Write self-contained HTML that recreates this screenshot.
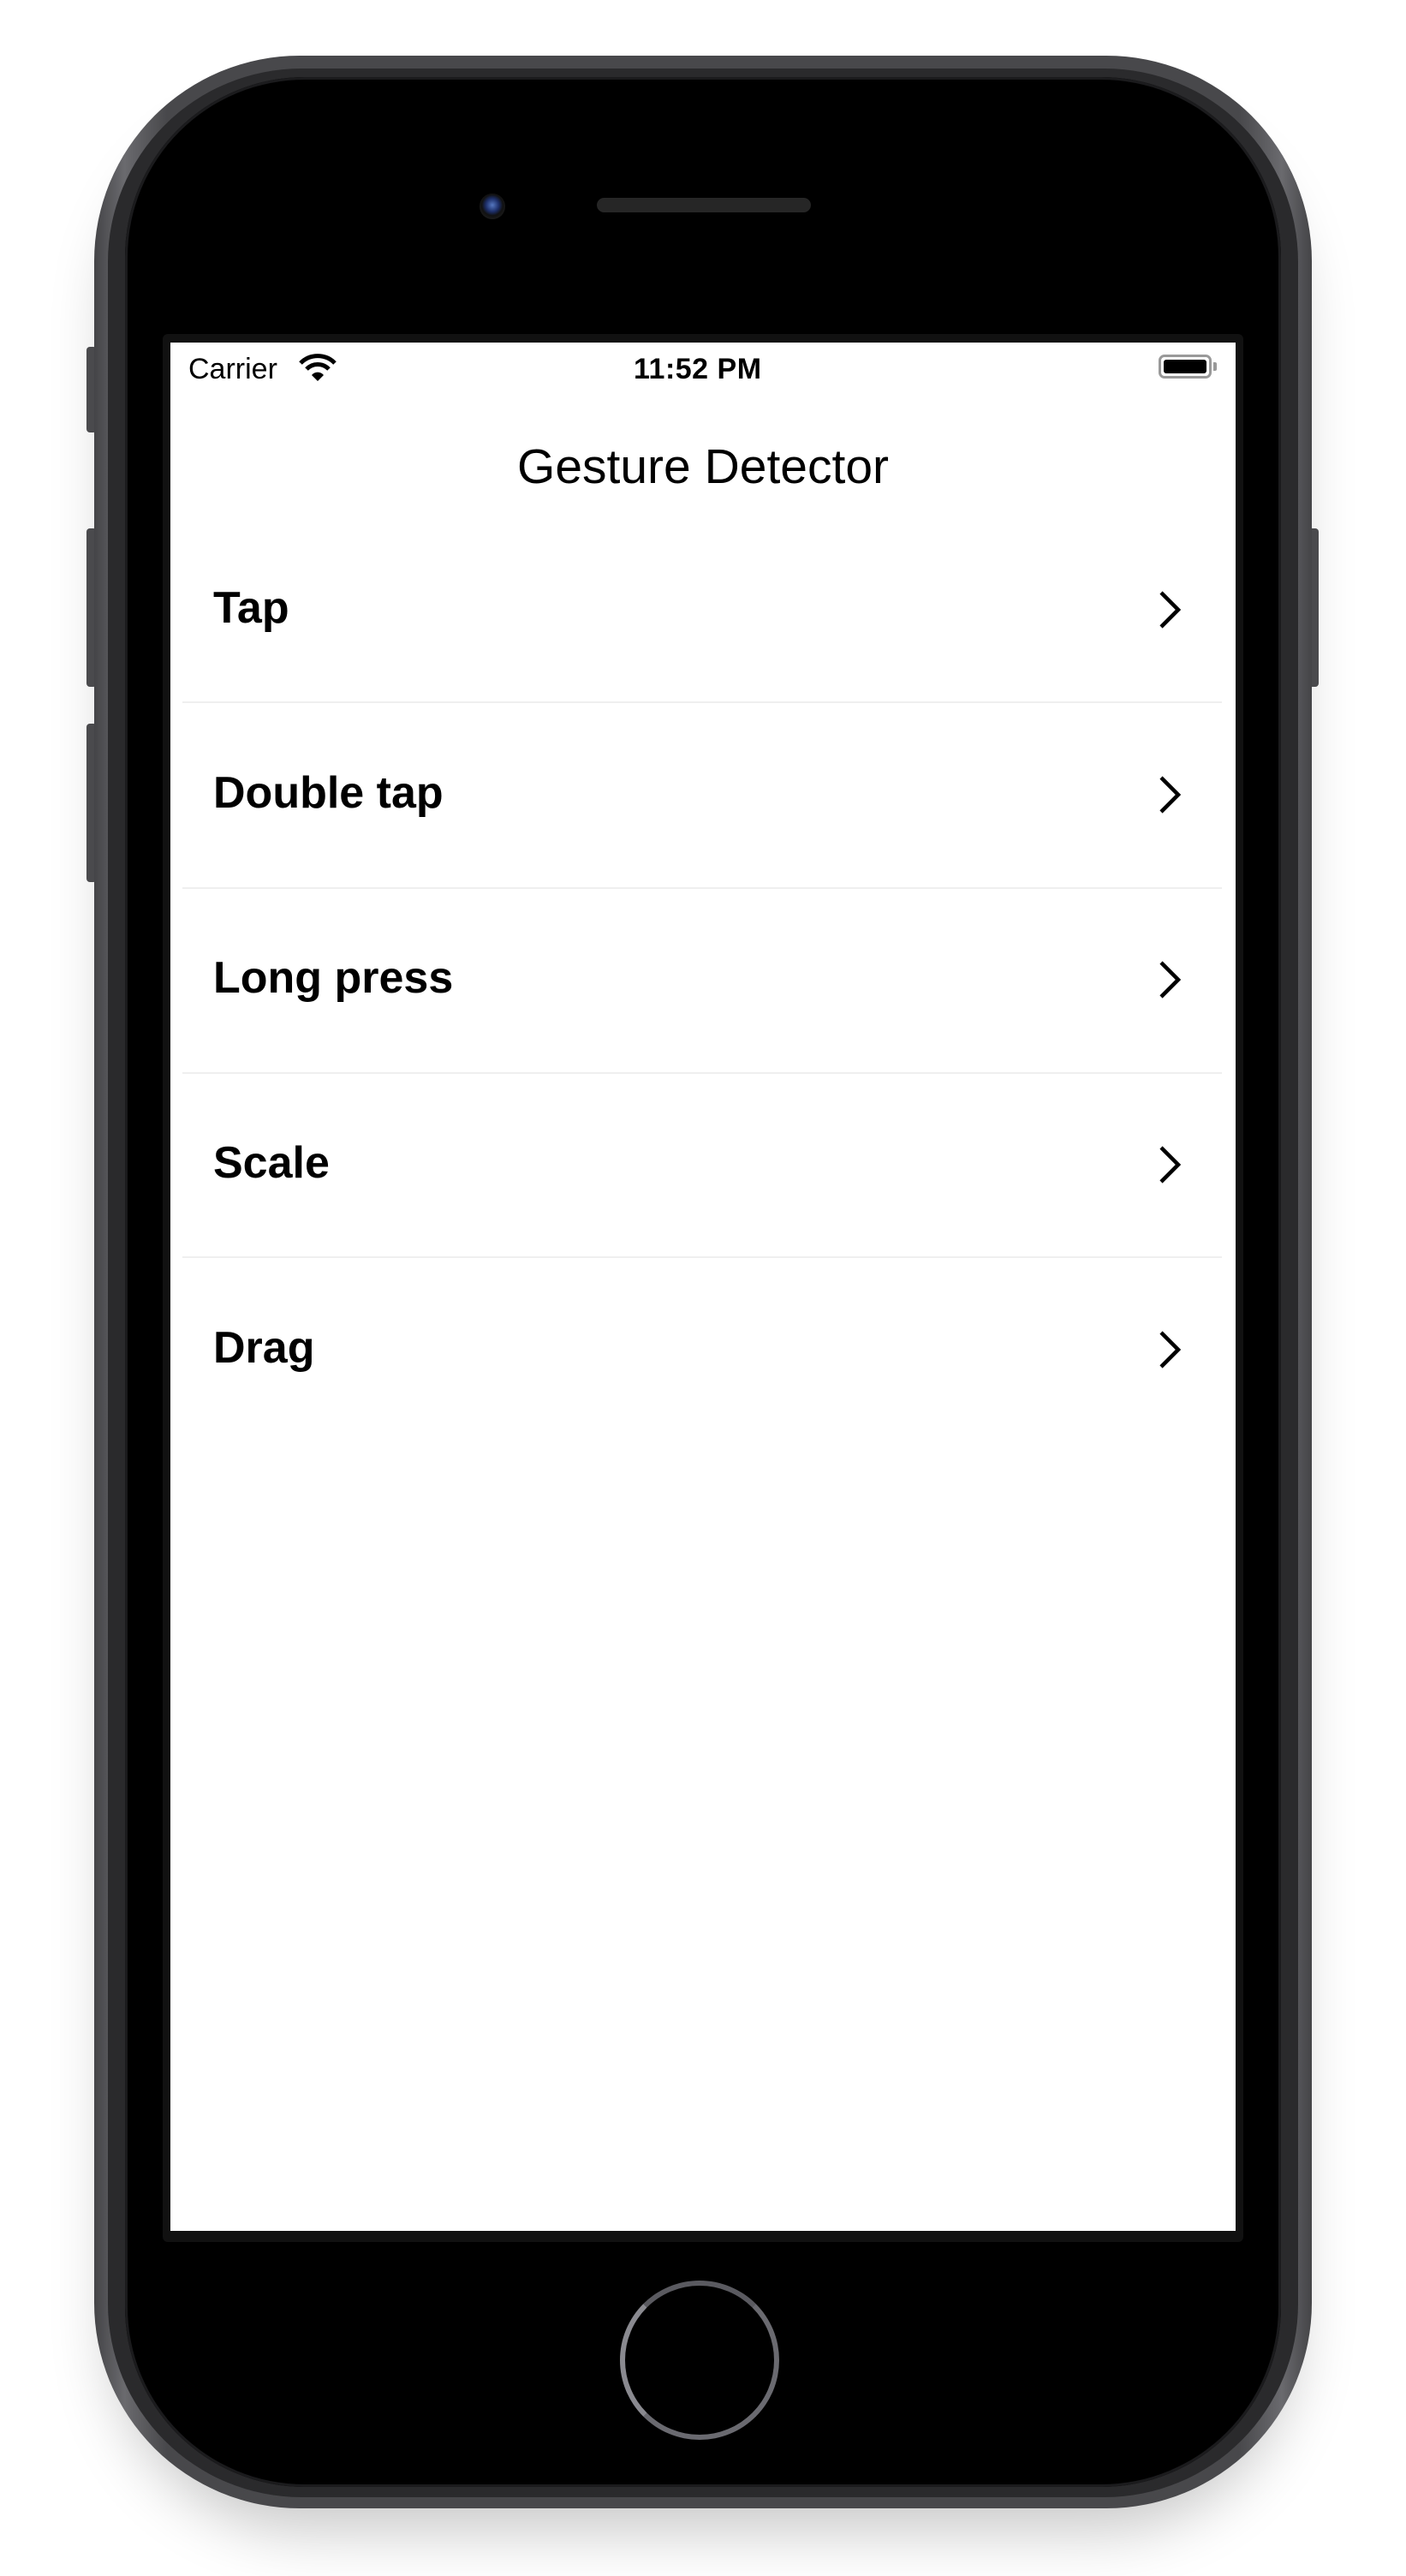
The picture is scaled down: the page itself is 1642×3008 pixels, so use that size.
<!DOCTYPE html>
<html><head><meta charset="utf-8"><style>
html,body{margin:0;padding:0;background:#fff;}
body{width:1642px;height:3008px;position:relative;overflow:hidden;font-family:"Liberation Sans",sans-serif;}
.shadow{position:absolute;left:130px;top:100px;width:1382px;height:2820px;border-radius:230px;box-shadow:0 35px 70px rgba(0,0,0,0.22);background:#444;}
.outer{position:absolute;left:110px;top:65px;width:1422px;height:2864px;border-radius:240px;background:linear-gradient(90deg,#444447,#6a6a6e 2.5%,#48484b 6%,#48484b 94%,#6a6a6e 97.5%,#444447);}
.rim{position:absolute;left:126px;top:80px;width:1390px;height:2836px;border-radius:226px;background:#2a2a2c;}
.face{position:absolute;left:146px;top:90px;width:1350px;height:2814px;border-radius:210px;background:#000;box-shadow:inset 0 0 0 3px #1b1b1d;}
.btn{position:absolute;background:#4a4a4d;border-radius:4px;}
.screenbg{position:absolute;left:190px;top:390px;width:1262px;height:2228px;background:#111;border-radius:6px;}
.screen{position:absolute;left:199px;top:400px;width:1244px;height:2205px;background:#fff;}
.cam{position:absolute;left:560px;top:226px;width:30px;height:30px;border-radius:50%;background:radial-gradient(circle at 50% 45%,#5577c0 0,#1c2d66 35%,#111 55%,#2a2a2a 100%);}
.spk{position:absolute;left:697px;top:231px;width:250px;height:17px;border-radius:9px;background:#262626;}
.home{position:absolute;left:724px;top:2663px;width:186px;height:186px;border-radius:50%;box-sizing:border-box;border:6px solid #6a6a70;border-top-color:#5a5a60;border-left-color:#8a8a90;}
.st{position:absolute;top:412px;font-size:34px;color:#000;}
.title{position:absolute;left:199px;width:1244px;top:512px;text-align:center;font-size:57px;color:#000;}
.row{position:absolute;left:249px;font-size:52px;font-weight:bold;color:#000;}
.sep{position:absolute;left:213px;width:1214px;height:2px;background:#efefef;}
.chev{position:absolute;left:1348px;}
</style></head><body>
<div class="shadow"></div>
<div class="btn" style="left:101px;top:405px;width:12px;height:100px"></div>
<div class="btn" style="left:101px;top:617px;width:12px;height:185px"></div>
<div class="btn" style="left:101px;top:845px;width:12px;height:185px"></div>
<div class="btn" style="left:1528px;top:617px;width:12px;height:185px"></div>
<div class="outer"></div>
<div class="rim"></div>
<div class="face"></div>
<div class="cam"></div>
<div class="spk"></div>
<div class="screenbg"></div>
<div class="screen"></div>
<div class="home"></div>

<div class="st" style="left:220px">Carrier</div>
<svg style="position:absolute;left:348px;top:412px" width="46" height="36" viewBox="0 0 46 36">
<path d="M3 12 A28 28 0 0 1 43 12" stroke="#000" stroke-width="5" fill="none"/>
<path d="M10 19 A18 18 0 0 1 36 19" stroke="#000" stroke-width="5" fill="none"/>
<path d="M16 26 A9 9 0 0 1 30 26 L23 33 Z" fill="#000"/>
</svg>
<div class="st" style="left:740px;font-weight:bold;letter-spacing:0.5px">11:52 PM</div>
<div style="position:absolute;left:1353px;top:414px;width:62px;height:28px;border:3px solid #999;border-radius:7px;box-sizing:border-box;padding:3px"><div style="width:100%;height:100%;background:#000;border-radius:3px"></div></div>
<div style="position:absolute;left:1417px;top:423px;width:4px;height:10px;background:#999;border-radius:0 2px 2px 0"></div>

<div class="title">Gesture Detector</div>

<div class="row" style="top:680px">Tap</div>
<div class="sep" style="top:819px"></div>
<div class="row" style="top:896px">Double tap</div>
<div class="sep" style="top:1036px"></div>
<div class="row" style="top:1112px">Long press</div>
<div class="sep" style="top:1252px"></div>
<div class="row" style="top:1328px">Scale</div>
<div class="sep" style="top:1467px"></div>
<div class="row" style="top:1544px">Drag</div>

<svg class="chev" style="top:689px" width="36" height="46" viewBox="0 0 36 46"><path d="M8 3 L28 23 L8 43" stroke="#000" stroke-width="4.5" fill="none"/></svg>
<svg class="chev" style="top:905px" width="36" height="46" viewBox="0 0 36 46"><path d="M8 3 L28 23 L8 43" stroke="#000" stroke-width="4.5" fill="none"/></svg>
<svg class="chev" style="top:1121px" width="36" height="46" viewBox="0 0 36 46"><path d="M8 3 L28 23 L8 43" stroke="#000" stroke-width="4.5" fill="none"/></svg>
<svg class="chev" style="top:1337px" width="36" height="46" viewBox="0 0 36 46"><path d="M8 3 L28 23 L8 43" stroke="#000" stroke-width="4.5" fill="none"/></svg>
<svg class="chev" style="top:1553px" width="36" height="46" viewBox="0 0 36 46"><path d="M8 3 L28 23 L8 43" stroke="#000" stroke-width="4.5" fill="none"/></svg>
</body></html>
